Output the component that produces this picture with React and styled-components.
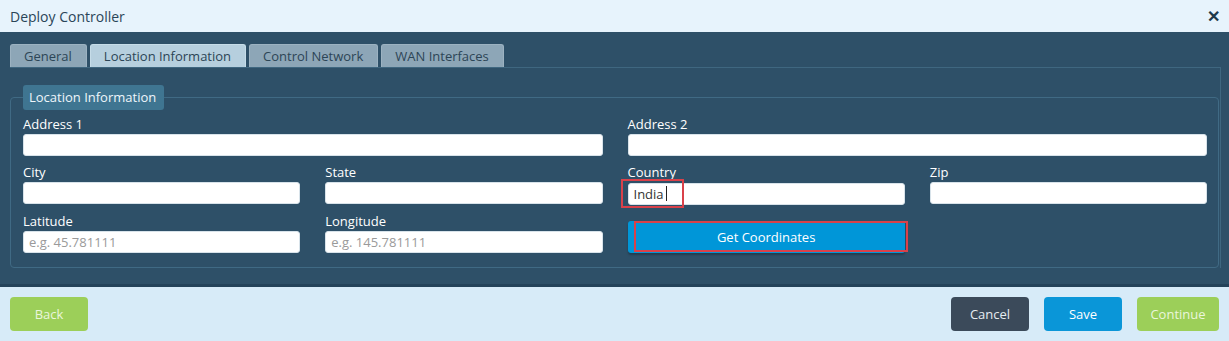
import React from 'react';
import styled, { createGlobalStyle } from 'styled-components';

const GlobalStyle = createGlobalStyle`
  html, body {
    margin: 0;
    padding: 0;
    background: #2e5068;
    font-family: "Open Sans", "Noto Sans", sans-serif;
  }
  * { box-sizing: border-box; }
`;

const Dialog = styled.div`
  width: 1229px;
  height: 341px;
  display: flex;
  flex-direction: column;
  background: #2e5068;
`;

const Header = styled.div`
  height: 32px;
  flex: none;
  display: flex;
  align-items: center;
  justify-content: space-between;
  padding: 0 9px 0 10px;
  background: #e7f3fc;
  color: #2a4558;
  font-size: 14px;
`;

const Close = styled.span`
  font-size: 16px;
  font-weight: 700;
  color: #20394b;
  line-height: 1;
`;

const Body = styled.div`
  height: 255px;
  flex: none;
  overflow: hidden;
  padding: 12px 8px 0 10px;
  border-bottom: 3px solid #24435a;
`;

const Tabs = styled.div`
  display: flex;
  gap: 3px;
  height: 24px;
  border-bottom: 1px solid #3f6780;
`;

const Tab = styled.div`
  padding: 0 14px 0 13px;
  display: flex;
  align-items: center;
  font-size: 13px;
  color: #2c4556;
  background: ${(p) => (p.$active ? '#b6cfde' : '#8da6b7')};
  border: 1px solid ${(p) => (p.$active ? '#c6dce8' : '#9cb2c1')};
  border-bottom: none;
  border-radius: 3px 3px 0 0;
`;

const Panel = styled.div`
  border-right: 1px solid #3f6780;
  padding: 17px 1px 0 0;
`;

const Fieldset = styled.fieldset`
  margin: 0;
  padding: 0 11px 14px 12px;
  border: 1px solid #406a84;
  border-radius: 4px;
  min-width: 0;
`;

const Legend = styled.legend`
  padding: 3px 8px 4px 6px;
  background: #3f7591;
  color: #eef6fb;
  font-size: 13px;
  border-radius: 3px;
`;

const Grid = styled.div`
  margin-top: 6px;
  display: grid;
  grid-template-columns: 1fr 1fr 1fr 1fr;
  column-gap: 25px;
  row-gap: 8px;
`;

const Field = styled.div`
  grid-column: span ${(p) => p.$span || 1};
  display: flex;
  flex-direction: column;
`;

const Label = styled.label`
  color: #ffffff;
  font-size: 13px;
  font-weight: 500;
  line-height: 16px;
  height: 16px;
  margin-bottom: 2px;
`;

const Input = styled.input`
  height: 22px;
  width: 100%;
  border: 1px solid #d8e3ea;
  border-radius: 3px;
  background: #ffffff;
  padding: 0 5px;
  font-family: "Open Sans", "Noto Sans", sans-serif;
  font-size: 13px;
  color: #333;
  outline: none;
  &::placeholder { color: #9a9a9a; }
`;

const Highlight = styled.div`
  position: relative;
`;

const RedBox = styled.div`
  position: absolute;
  border: 2px solid #d9414a;
  pointer-events: none;
`;

const Caret = styled.span`
  position: absolute;
  left: 38px;
  top: 4px;
  width: 1px;
  height: 15px;
  background: #222;
`;

const CoordButton = styled.button`
  margin-top: 8px;
  height: 32px;
  width: 100%;
  background: #0096d8;
  border: none;
  border-radius: 3px;
  color: #ffffff;
  font-family: "Open Sans", "Noto Sans", sans-serif;
  font-size: 13px;
  box-shadow: 0 2px 2px rgba(0, 0, 0, 0.25);
`;

const Footer = styled.div`
  height: 54px;
  flex: none;
  display: flex;
  align-items: center;
  padding: 0 10px;
  background: #d7ebf8;
`;

const Spacer = styled.div`
  flex: 1;
`;

const Button = styled.button`
  height: 34px;
  width: ${(p) => p.$w || 78}px;
  margin-left: ${(p) => p.$ml || 0}px;
  border: none;
  border-radius: 4px;
  font-family: "Open Sans", "Noto Sans", sans-serif;
  font-size: 13px;
  background: ${(p) => p.$bg};
  color: ${(p) => p.$fg};
`;

export default function App() {
  return (
    <Dialog>
      <GlobalStyle />
      <Header>
        <span>Deploy Controller</span>
        <Close>✕</Close>
      </Header>
      <Body>
        <Tabs>
          <Tab>General</Tab>
          <Tab $active>Location Information</Tab>
          <Tab>Control Network</Tab>
          <Tab>WAN Interfaces</Tab>
        </Tabs>
        <Panel>
          <Fieldset>
            <Legend>Location Information</Legend>
            <Grid>
              <Field $span={2}>
                <Label>Address 1</Label>
                <Input />
              </Field>
              <Field $span={2}>
                <Label>Address 2</Label>
                <Input />
              </Field>
              <Field>
                <Label>City</Label>
                <Input />
              </Field>
              <Field>
                <Label>State</Label>
                <Input />
              </Field>
              <Field>
                <Label>Country</Label>
                <Highlight>
                  <Input defaultValue="India" />
                  <Caret />
                  <RedBox style={{ left: -7, top: -3, width: 63, height: 29 }} />
                </Highlight>
              </Field>
              <Field>
                <Label>Zip</Label>
                <Input />
              </Field>
              <Field>
                <Label>Latitude</Label>
                <Input placeholder="e.g. 45.781111" />
              </Field>
              <Field>
                <Label>Longitude</Label>
                <Input placeholder="e.g. 145.781111" />
              </Field>
              <Field>
                <Highlight>
                  <CoordButton>Get Coordinates</CoordButton>
                  <RedBox style={{ left: 6, top: 8, width: 274, height: 31 }} />
                </Highlight>
              </Field>
            </Grid>
          </Fieldset>
        </Panel>
      </Body>
      <Footer>
        <Button $bg="#9ccf59" $fg="#eaf6dc">Back</Button>
        <Spacer />
        <Button $bg="#3b4a5a" $fg="#e6ecf1">Cancel</Button>
        <Button $bg="#0a96d8" $fg="#ffffff" $ml={15}>Save</Button>
        <Button $bg="#9ccf59" $fg="#eaf6dc" $ml={15} $w={82}>Continue</Button>
      </Footer>
    </Dialog>
  );
}
